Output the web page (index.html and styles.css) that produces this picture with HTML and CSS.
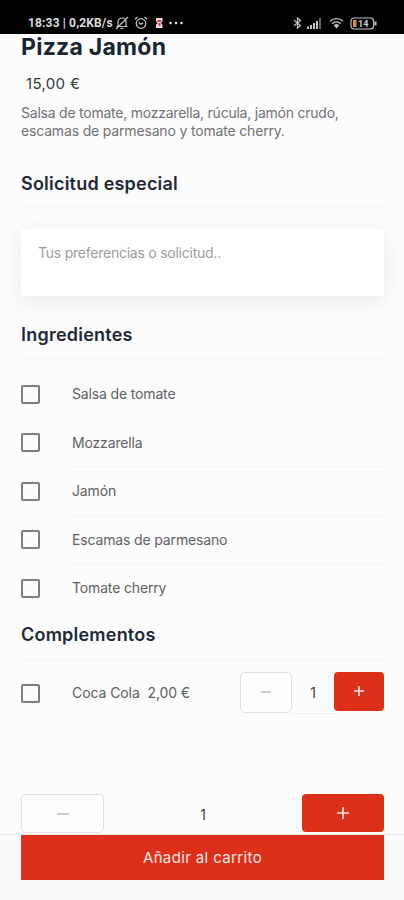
FILE: index.html
```html
<!DOCTYPE html>
<html lang="es">
    <head>
        <meta charset="UTF-8" />
        <meta name="viewport" content="width=device-width, initial-scale=1.0" />
        <title>Pizza Jamón</title>
        <link rel="stylesheet" href="styles.css">
    </head>
    <body>
        <header class="status">
            <span class="status-text">18:33 | 0,2KB/s</span>
            <svg class="icon-mute" width="14" height="14" viewBox="0 0 14 14">
                <path d="M3 10V6a4 4 0 0 1 8 0v4M1.500 10.500h11M5.500 12.500h3M1 13L13 1" />
            </svg>
            <svg class="icon-alarm" width="14" height="14" viewBox="0 0 14 14">
                <circle cx="7" cy="7.500" r="4.800" />
                <path d="M1 3.200L3.500 1M13 3.200L10.500 1M4.800 6.500L7 8.300l2.200-1.300" />
            </svg>
            <svg class="icon-app" width="7" height="10" viewBox="0 0 7 10">
                <path fill="#f3dcdc" d="M0 0h6.500v3L5 5l1.500 2v3H0V7l1.500-2L0 3z" />
                <path fill="#d8344a" d="M1.500 2h3.500v2H1.500zM2.500 5h2v3h-2z" />
            </svg>
            <svg class="icon-more" width="14" height="4" viewBox="0 0 14 4">
                <circle cx="1.500" cy="2" r="1.300" />
                <circle cx="7" cy="2" r="1.300" />
                <circle cx="12.500" cy="2" r="1.300" />
            </svg>
            <svg class="icon-bluetooth" width="9" height="12" viewBox="0 0 9 12">
                <path d="M1 3.300L7.500 8.500 4.500 11V1l3 2.500L1 8.700" />
            </svg>
            <svg class="icon-signal" width="15" height="11" viewBox="0 0 15 11">
                <path d="M0 8.500h2V11H0zM3 7h2v4H3zM6 5h2v6H6zM9 3h2v8H9z" />
                <path opacity=".5" d="M12 0h2v11h-2z" />
            </svg>
            <svg class="icon-wifi" width="15" height="12" viewBox="0 0 15 12">
                <path d="M1 4.200a9.500 9.500 0 0 1 13 0M3.200 6.700a6.200 6.200 0 0 1 8.600 0" />
                <path class="dot" d="M4.800 8.300a4 4 0 0 1 5.400 0L7.500 11.500z" />
            </svg>
            <svg class="icon-battery" width="27" height="13" viewBox="0 0 27 13">
                <rect x="1" y="1" width="22.500" height="11" rx="3" />
                <path class="charge" d="M3 3h3.500v7H3z" />
                <path class="tip" d="M24.500 4.500h2v4h-2z" />
                <text x="8" y="10">14</text>
            </svg>
        </header>

        <main>
            <h1>Pizza Jamón</h1>
            <p class="price">15,00 €</p>
            <p class="description">
                <span class="line-one">Salsa de tomate, mozzarella, rúcula, jamón crudo,</span><br>
                <span class="line-two">escamas de parmesano y tomate cherry.</span>
            </p>

            <h2 class="request-title">Solicitud especial</h2>
            <div class="request">Tus preferencias o solicitud..</div>

            <h2 class="ingredients-title">Ingredientes</h2>
            <ul class="ingredients">
                <li><span class="check"></span><span class="name plain">Salsa de tomate</span></li>
                <li><span class="check"></span><span class="name">Mozzarella</span></li>
                <li><span class="check"></span><span class="name">Jamón</span></li>
                <li><span class="check"></span><span class="name">Escamas de parmesano</span></li>
                <li><span class="check"></span><span class="name plain">Tomate cherry</span></li>
            </ul>

            <h2 class="extras-title">Complementos</h2>
            <div class="extra">
                <span class="check"></span>
                <span class="extra-name">Coca Cola&nbsp; 2,00 €</span>
                <div class="stepper">
                    <button class="minus"><svg width="10" height="10" viewBox="0 0 10 10"><path d="M0 5h10" /></svg></button>
                    <span class="amount">1</span>
                    <button class="plus"><svg width="10" height="10" viewBox="0 0 10 10"><path d="M0 5h10M5 0v10" /></svg></button>
                </div>
            </div>
        </main>

        <div class="quantity">
            <button class="minus"><svg width="12" height="12" viewBox="0 0 12 12"><path d="M0 6h12" /></svg></button>
            <span class="amount">1</span>
            <button class="plus"><svg width="12" height="12" viewBox="0 0 12 12"><path d="M0 6h12M6 0v12" /></svg></button>
        </div>
        <footer>
            <button class="add">Añadir al carrito</button>
        </footer>
    </body>
</html>
```

FILE: styles.css
```css
* {
    box-sizing: border-box;
}
body {
    margin: 0;
    height: 900px;
    display: flex;
    flex-direction: column;
    overflow: hidden;
    background: #fcfcfc;
    font-family: Inter, sans-serif;
    color: #5f6165;
}
h1, h2, p, ul {
    margin: 0;
    padding: 0;
}
button {
    padding: 0;
    font-family: inherit;
    display: flex;
    align-items: center;
    justify-content: center;
}

/* status bar */
.status {
    height: 34px;
    flex: none;
    padding: 12px 27px 0 28px;
    background: #000;
    display: flex;
    align-items: center;
}
.status svg {
    flex: none;
    fill: none;
    stroke: #c4c4c4;
    stroke-width: 1.2;
}
.status-text {
    width: 85px;
    font: 700 12px Roboto, sans-serif;
    letter-spacing: 0.15px;
    color: #ddd;
    white-space: nowrap;
}
.icon-mute {
    margin-left: 2px;
}
.icon-alarm {
    margin-left: 5px;
}
.status .icon-app {
    margin-left: 8px;
    stroke: none;
}
.status .icon-more {
    margin-left: 6px;
    fill: #ddd;
    stroke: none;
}
.icon-bluetooth {
    margin-left: auto;
}
.status .icon-signal {
    margin-left: 5px;
    fill: #c4c4c4;
    stroke: none;
}
.icon-wifi {
    margin-left: 7px;
}
.icon-wifi .dot {
    fill: #c4c4c4;
    stroke: none;
}
.icon-battery {
    margin-left: 6px;
}
.icon-battery .charge {
    fill: #d9902f;
    stroke: none;
}
.icon-battery .tip {
    fill: #c4c4c4;
    stroke: none;
}
.icon-battery text {
    font: 700 9px Roboto, sans-serif;
    fill: #ccc;
    stroke: none;
}

main {
    height: 760px;
    flex: none;
    padding: 0 20px 0 21px;
}
h1 {
    height: 37px;
    line-height: 26px;
    font-size: 23px;
    font-weight: 700;
    letter-spacing: 0.25px;
    color: #182632;
}
.price {
    height: 33px;
    padding-left: 5px;
    line-height: 26px;
    font-size: 15px;
    letter-spacing: 0.35px;
    color: #36383b;
}
.description {
    height: 60px;
    line-height: 18px;
    font-size: 14px;
    white-space: nowrap;
    color: #707276;
}
.line-one {
    letter-spacing: -0.23px;
}
.line-two {
    letter-spacing: -0.17px;
}
h2 {
    font-size: 18px;
    font-weight: 600;
    line-height: 24px;
    letter-spacing: 0.22px;
    color: #1d2935;
    border-bottom: 1px solid #f3f3f4;
}
.request-title {
    height: 43px;
    padding-top: 8px;
}
.request {
    height: 67px;
    margin-top: 22px;
    padding: 14px 17px;
    background: #fff;
    border-radius: 2px;
    box-shadow: 0 5px 20px rgba(30, 40, 50, .09);
    font-size: 14px;
    line-height: 19px;
    letter-spacing: -0.24px;
    color: #9b9da0;
}
.ingredients-title {
    margin-top: 27px;
    height: 36px;
}
.ingredients {
    list-style: none;
    padding-top: 11px;
}
.ingredients li {
    height: 48.5px;
    display: flex;
    align-items: center;
}
.check {
    width: 19px;
    height: 19px;
    flex: none;
    border: 2px solid #7c7d80;
    border-radius: 2px;
}
.name {
    height: 100%;
    flex: 1;
    margin-left: 32px;
    font-size: 14px;
    line-height: 48px;
    letter-spacing: -0.15px;
    border-bottom: 1px solid #f5f5f6;
}
.plain {
    border: 0;
}
.extras-title {
    margin-top: 10px;
    height: 37px;
}
.extra {
    height: 60px;
    padding-top: 12px;
    display: flex;
    align-items: flex-start;
}
.extra .check {
    margin-top: 12px;
}
.extra-name {
    margin-left: 32px;
    width: 168px;
    line-height: 41px;
    font-size: 14px;
    letter-spacing: -0.08px;
    white-space: nowrap;
}
.amount {
    text-align: center;
    font-size: 14px;
    color: #3d3f42;
}
.minus {
    background: #fefefe;
    border: 1px solid #dedfe0;
    border-radius: 5px;
}
.plus {
    background: #dc301b;
    border: 0;
    border-radius: 4px;
}
button svg {
    fill: none;
    stroke-width: 1.7;
}
.minus svg {
    stroke: #bfc1c3;
}
.plus svg {
    stroke: #fbe1dd;
}
.stepper {
    flex: 1;
    display: flex;
}
.stepper .minus {
    width: 52px;
    height: 41px;
}
.stepper .amount {
    flex: 1;
    line-height: 41px;
    border-bottom: 1px solid #eeeeef;
}
.stepper .plus {
    width: 50px;
    height: 39px;
}

/* quantity and order button */
.quantity {
    height: 41px;
    flex: none;
    padding: 0 20px 0 21px;
    display: flex;
    justify-content: space-between;
    border-bottom: 1px solid #e9e9ea;
}
.quantity .minus {
    width: 83px;
    height: 39px;
}
.quantity .plus {
    width: 82px;
    height: 38px;
}
.quantity .amount {
    line-height: 41px;
}
footer {
    flex: 1;
    padding: 0 20px 0 21px;
    background: #fafafa;
}
.add {
    width: 100%;
    height: 45px;
    border: 0;
    background: #dc301b;
    color: #fbe6e2;
    font-size: 15px;
    letter-spacing: 0.37px;
}
```
